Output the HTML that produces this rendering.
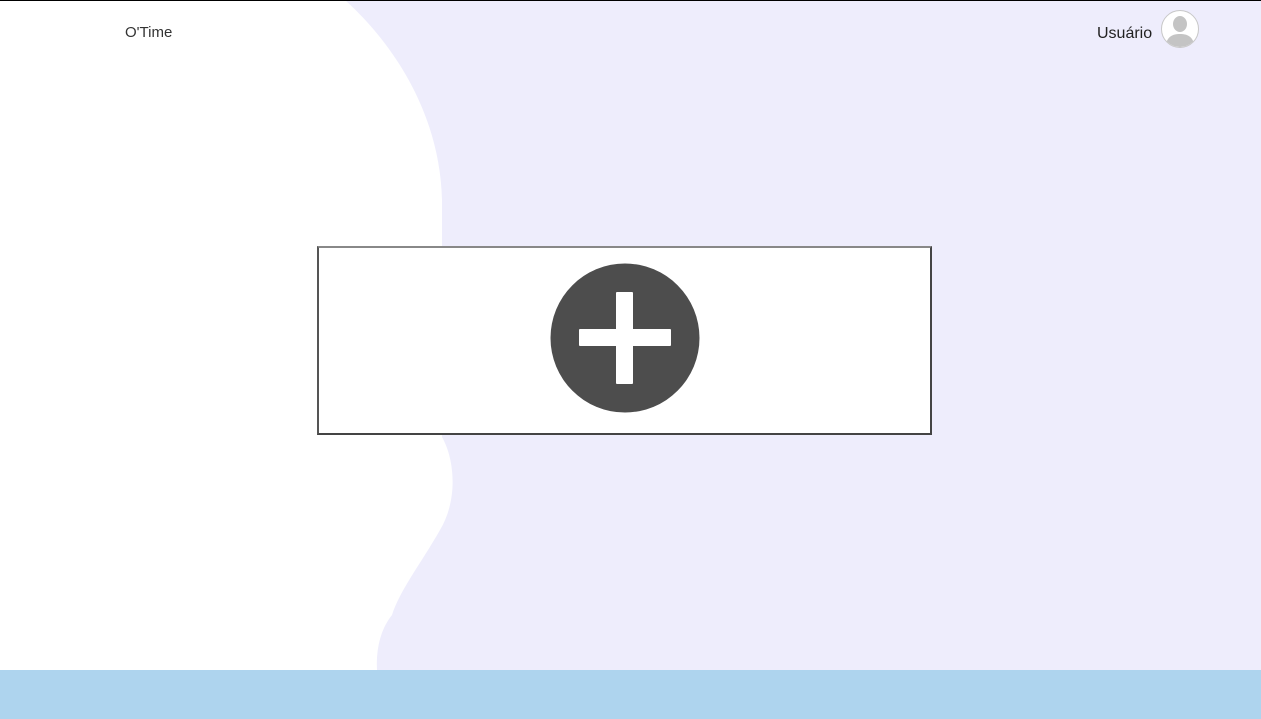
<!DOCTYPE html>
<html><head><meta charset="utf-8"><style>
body{margin:0;width:1261px;height:719px;overflow:hidden;background:#EEEDFC;font-family:"Liberation Sans",Arial,sans-serif;position:relative}
.top{position:absolute;left:0;top:0;width:1261px;height:1px;background:#000}
.logo{position:absolute;left:125px;top:24px;font-size:15px;color:#333}
.user{position:absolute;left:1097px;top:25px;font-size:16px;color:#222}
.av{position:absolute;left:1161px;top:10px;width:36px;height:36px;border-radius:50%;background:#fff;border:1px solid #c8c8c8;overflow:hidden}
.box{position:absolute;left:317px;top:246px;width:611px;height:185px;background:#fff;border:2px solid #444;border-top-color:#888;border-left-color:#555}
.foot{position:absolute;left:0;top:670px;width:1261px;height:49px;background:#AED4EE}
</style></head><body>
<svg style="position:absolute;left:0;top:0" width="1261" height="719">
<path d="M0 0 L345 0 C400 50 440 120 442 200 L442 437 C455 460 458 500 440 530 C420 565 400 590 392 615 C380 630 376 650 377 670 L0 670 Z" fill="#fff"/>
</svg>
<div class="top"></div>
<div class="logo">O'Time</div>
<div class="user">Usuário</div>
<div class="av"><svg width="36" height="36"><ellipse cx="18" cy="13" rx="7" ry="8" fill="#c4c4c4"/><path d="M3 36 C5 25 11 23 18 23 C25 23 31 25 33 36 Z" fill="#c4c4c4"/></svg></div>
<div class="box"><svg style="position:absolute;left:231px;top:15px" width="150" height="150"><circle cx="75" cy="75" r="74.5" fill="#4d4d4d"/><rect x="29" y="66" width="92" height="17" rx="1" fill="#fff"/><rect x="66" y="29" width="17" height="92" rx="1" fill="#fff"/></svg></div>
<div class="foot"></div>
</body></html>
